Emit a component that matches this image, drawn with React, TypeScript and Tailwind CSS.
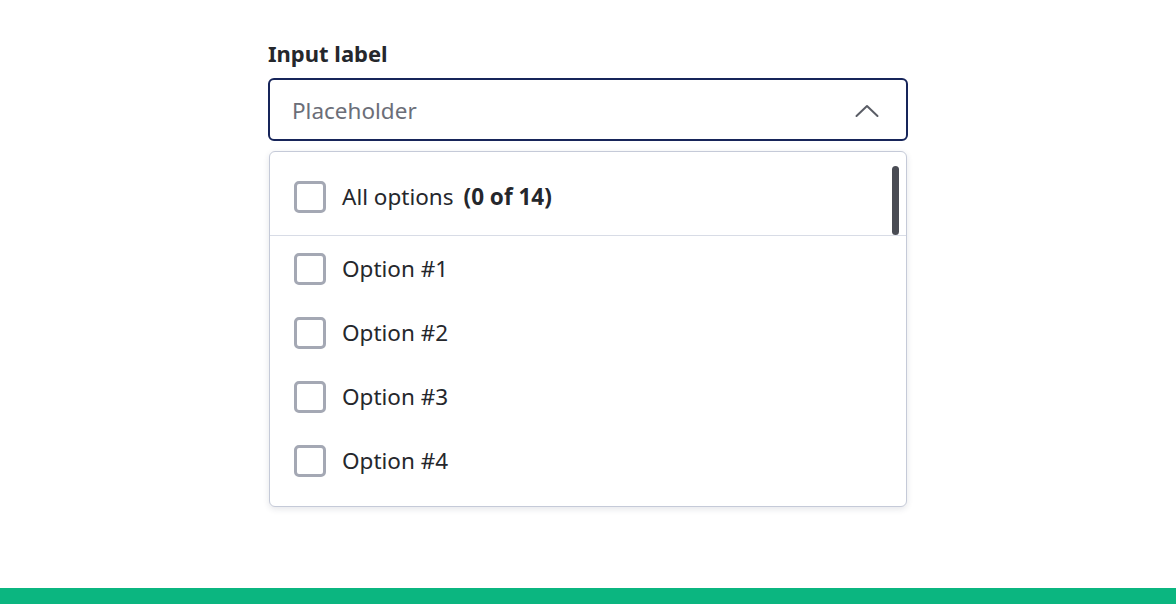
const OPTIONS = ["Option #1", "Option #2", "Option #3", "Option #4"];

function Checkbox() {
  return <span className="block h-8 w-8 shrink-0 rounded-[5px] border-[3px] border-[#a4a8b4] bg-white" />;
}

export default function App() {
  return (
    <div
      className="flex h-[604px] flex-col bg-white text-[#25272c]"
      style={{ fontFamily: '"Noto Sans", "Open Sans", sans-serif' }}
    >
      <div className="mx-auto w-[640px] pt-[38px]">
        <label className="block text-[22px] font-bold leading-[30px]">Input label</label>

        {/* select trigger */}
        <button className="mt-[10px] flex h-[63px] w-full items-center justify-between rounded-[6px] border-2 border-[#17255a] bg-white pl-[22px] pr-[27px] pt-[2px] text-left">
          <span className="text-[22.5px] text-[#6b6e78]">Placeholder</span>
          <svg width="24" height="14" viewBox="0 0 24 14" fill="none">
            <polyline points="1.5,12 12,2 22.5,12" stroke="#5a5d66" strokeWidth="2" strokeLinecap="round" strokeLinejoin="round" />
          </svg>
        </button>

        {/* dropdown */}
        <div className="relative mx-[1px] mt-[10px] h-[356px] overflow-hidden rounded-[6px] border border-[#c5cad8] bg-white shadow-[0_2px_6px_rgba(30,40,70,0.12)]">
          <div className="flex h-[84px] items-center gap-4 border-b border-[#d8dce6] pl-6 pt-[7px]">
            <Checkbox />
            <span className="text-[22.5px]">
              All options<span className="ml-[10px] font-bold">(0 of 14)</span>
            </span>
          </div>

          <ul className="pt-[1px]">
            {OPTIONS.map((o) => (
              <li key={o} className="flex h-16 items-center gap-4 pl-6">
                <Checkbox />
                <span className="text-[22.5px]">{o}</span>
              </li>
            ))}
          </ul>

          {/* scrollbar thumb */}
          <div className="absolute right-[7px] top-[14px] h-[69px] w-[7px] rounded-full bg-[#4a4c54]" />
        </div>
      </div>

      <div className="mt-auto h-4 w-full bg-[#0bb680]" />
    </div>
  );
}
